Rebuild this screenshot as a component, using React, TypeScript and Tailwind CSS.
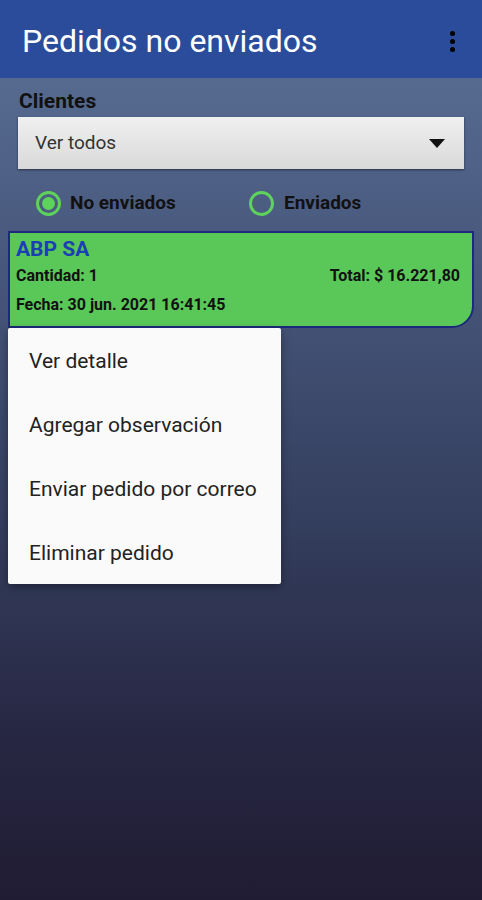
import React from "react";

export default function App() {
  const font = { fontFamily: "Roboto, 'Noto Sans', sans-serif" };
  return (
    <div
      className="w-[482px] h-[900px] flex flex-col overflow-hidden"
      style={font}
    >
      <div className="h-[78px] bg-[#2a4c9a] flex items-center justify-between pl-[22px] pr-[27px] shrink-0">
        <span className="text-white text-[32px] leading-none mt-[4px]">Pedidos no enviados</span>
        <div className="flex flex-col gap-[3px] items-center mt-[4px]">
          <span className="w-[5px] h-[5px] rounded-full bg-black" />
          <span className="w-[5px] h-[5px] rounded-full bg-black" />
          <span className="w-[5px] h-[5px] rounded-full bg-black" />
        </div>
      </div>
      <div className="flex-1 bg-[linear-gradient(to_bottom,#566a90_0%,#46557a_25%,#333d5c_55%,#272743_80%,#201c33_100%)] flex flex-col">
        <div className="pl-[19px] pt-[11px] text-[21px] font-bold text-[#111] leading-[24px]">Clientes</div>
        <div className="mx-[18px] mt-[4px] h-[52px] bg-[linear-gradient(to_bottom,#f0f0f0,#d9d9d9)] shadow-[0_1px_2px_rgba(0,0,0,0.5)] flex items-center justify-between pl-[17px] pr-[19px]">
          <span className="text-[19px] text-[#333]">Ver todos</span>
          <svg width="16" height="9" viewBox="0 0 16 9">
            <path d="M0 0 L16 0 L8 9 Z" fill="#111" />
          </svg>
        </div>
        <div className="flex items-center h-[42px] mt-[13px]">
          <div className="flex items-center pl-[36px] w-[249px]">
            <span className="w-[25px] h-[25px] rounded-full border-[3px] border-[#5dd35b] flex items-center justify-center">
              <span className="w-[13px] h-[13px] rounded-full bg-[#5dd35b]" />
            </span>
            <span className="ml-[9px] text-[19px] font-bold text-[#111]">No enviados</span>
          </div>
          <div className="flex items-center">
            <span className="w-[25px] h-[25px] rounded-full border-[3px] border-[#5dd35b]" />
            <span className="ml-[10px] text-[19px] font-bold text-[#111]">Enviados</span>
          </div>
        </div>
        <div className="mx-[8px] mt-[7px] h-[97px] bg-[#5ac858] border-2 border-[#1b2a7c] rounded-br-[22px] px-[6px] pt-[2px] flex flex-col">
          <div className="text-[21px] font-bold text-[#1a3fb5] leading-[28px]">ABP SA</div>
          <div className="flex justify-between items-center mt-[3px] pr-[6px] leading-[20px]">
            <span className="text-[16px] font-bold text-[#111]">Cantidad: 1</span>
            <span className="text-[16px] font-bold text-[#111]">Total: $ 16.221,80</span>
          </div>
          <div className="text-[16px] font-bold text-[#111] mt-[9px] leading-[20px]">Fecha: 30 jun. 2021 16:41:45</div>
        </div>
        <div className="ml-[8px] w-[273px] h-[256px] bg-[#fafafa] rounded-[2px] shadow-[0_3px_8px_rgba(0,0,0,0.35)] flex flex-col pt-[2px]">
          {["Ver detalle", "Agregar observación", "Enviar pedido por correo", "Eliminar pedido"].map((t) => (
            <div key={t} className="h-[64px] shrink-0 flex items-center pl-[21px] text-[21px] text-[#222]">
              {t}
            </div>
          ))}
        </div>
      </div>
    </div>
  );
}
